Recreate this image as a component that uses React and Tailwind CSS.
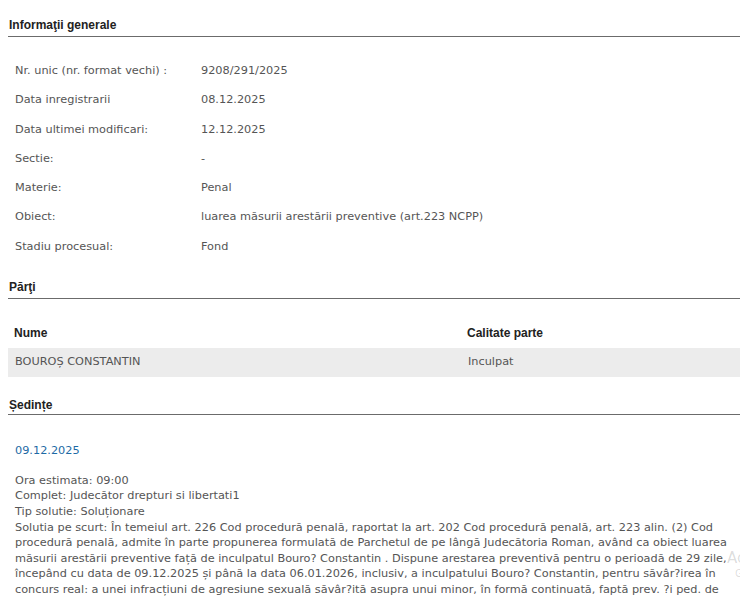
import React from "react";

const body = { fontFamily: '"DejaVu Sans", Verdana, sans-serif' };
const head = { fontFamily: '"Liberation Sans", Arial, sans-serif' };

function Header({ children, className = "" }) {
  return (
    <div className={"border-b border-[#6b6b6b] " + className}>
      <h2 className="text-[12px] font-bold text-[#222] leading-[16px] pl-px" style={head}>{children}</h2>
    </div>
  );
}

const info = [
  ["Nr. unic (nr. format vechi) :", "9208/291/2025"],
  ["Data inregistrarii", "08.12.2025"],
  ["Data ultimei modificari:", "12.12.2025"],
  ["Sectie:", "-"],
  ["Materie:", "Penal"],
  ["Obiect:", "luarea măsurii arestării preventive (art.223 NCPP)"],
  ["Stadiu procesual:", "Fond"],
];

export default function App() {
  return (
    <div className="relative bg-white w-[740px] h-[600px] overflow-hidden pl-2 pt-[17px] text-[#555] text-[11.3px]" style={body}>
      <Header className="pb-[3px]">Informaţii generale</Header>
      <div className="pt-[20px] pl-[7px]">
        {info.map(([k, v]) => (
          <div key={k} className="flex h-[29.25px] items-center">
            <div className="w-[186px]">{k}</div>
            <div>{v}</div>
          </div>
        ))}
      </div>
      <Header className="mt-[17px] pb-[3px]">Părţi</Header>
      <div className="mt-[19px]">
        <div className="flex h-[30px] items-center text-[12px] font-bold text-[#222]" style={head}>
          <div className="w-[459px] pl-[6px] pt-px">Nume</div>
          <div className="pt-px">Calitate parte</div>
        </div>
        <div className="flex h-[29px] items-center bg-[#ececec]">
          <div className="w-[459px] pl-[7px]">BOUROȘ CONSTANTIN</div>
          <div className="pl-px">Inculpat</div>
        </div>
      </div>
      <Header className="mt-[20px] pb-px">Ședințe</Header>
      <div className="pl-[7px] pr-[3px]">
        <div className="mt-[28px] text-[#1d6aa5] leading-[16px]">09.12.2025</div>
        <div className="mt-[14px] leading-[15.6px]">
          <div>Ora estimata: 09:00</div>
          <div>Complet: Judecător drepturi si libertati1</div>
          <div>Tip solutie: Soluționare</div>
          <div>
            Solutia pe scurt: În temeiul art. 226 Cod procedură penală, raportat la art. 202 Cod procedură penală, art. 223 alin. (2) Cod procedură penală, admite în parte propunerea formulată de Parchetul de pe lângă Judecătoria Roman, având ca obiect luarea măsurii arestării preventive față de inculpatul Bouro? Constantin . Dispune arestarea preventivă pentru o perioadă de 29 zile, începând cu data de 09.12.2025 și până la data 06.01.2026, inclusiv, a inculpatului Bouro? Constantin, pentru săvâr?irea în concurs real: a unei infracțiuni de agresiune sexuală săvâr?ită asupra unui minor, în formă continuată, faptă prev. ?i ped. de art. 219 alin. (1) și (2) lit. a) Cod penal cu aplicarea art. 35 alin. (1) Cod penal.
          </div>
        </div>
      </div>
      <div className="absolute left-[727px] top-[551px] text-[15px] text-black/15 whitespace-nowrap leading-none" style={body}>Activate Windows</div>
      <div className="absolute left-[735px] top-[569px] text-[10px] text-black/15 whitespace-nowrap leading-none" style={body}>Go to Settings</div>
    </div>
  );
}
